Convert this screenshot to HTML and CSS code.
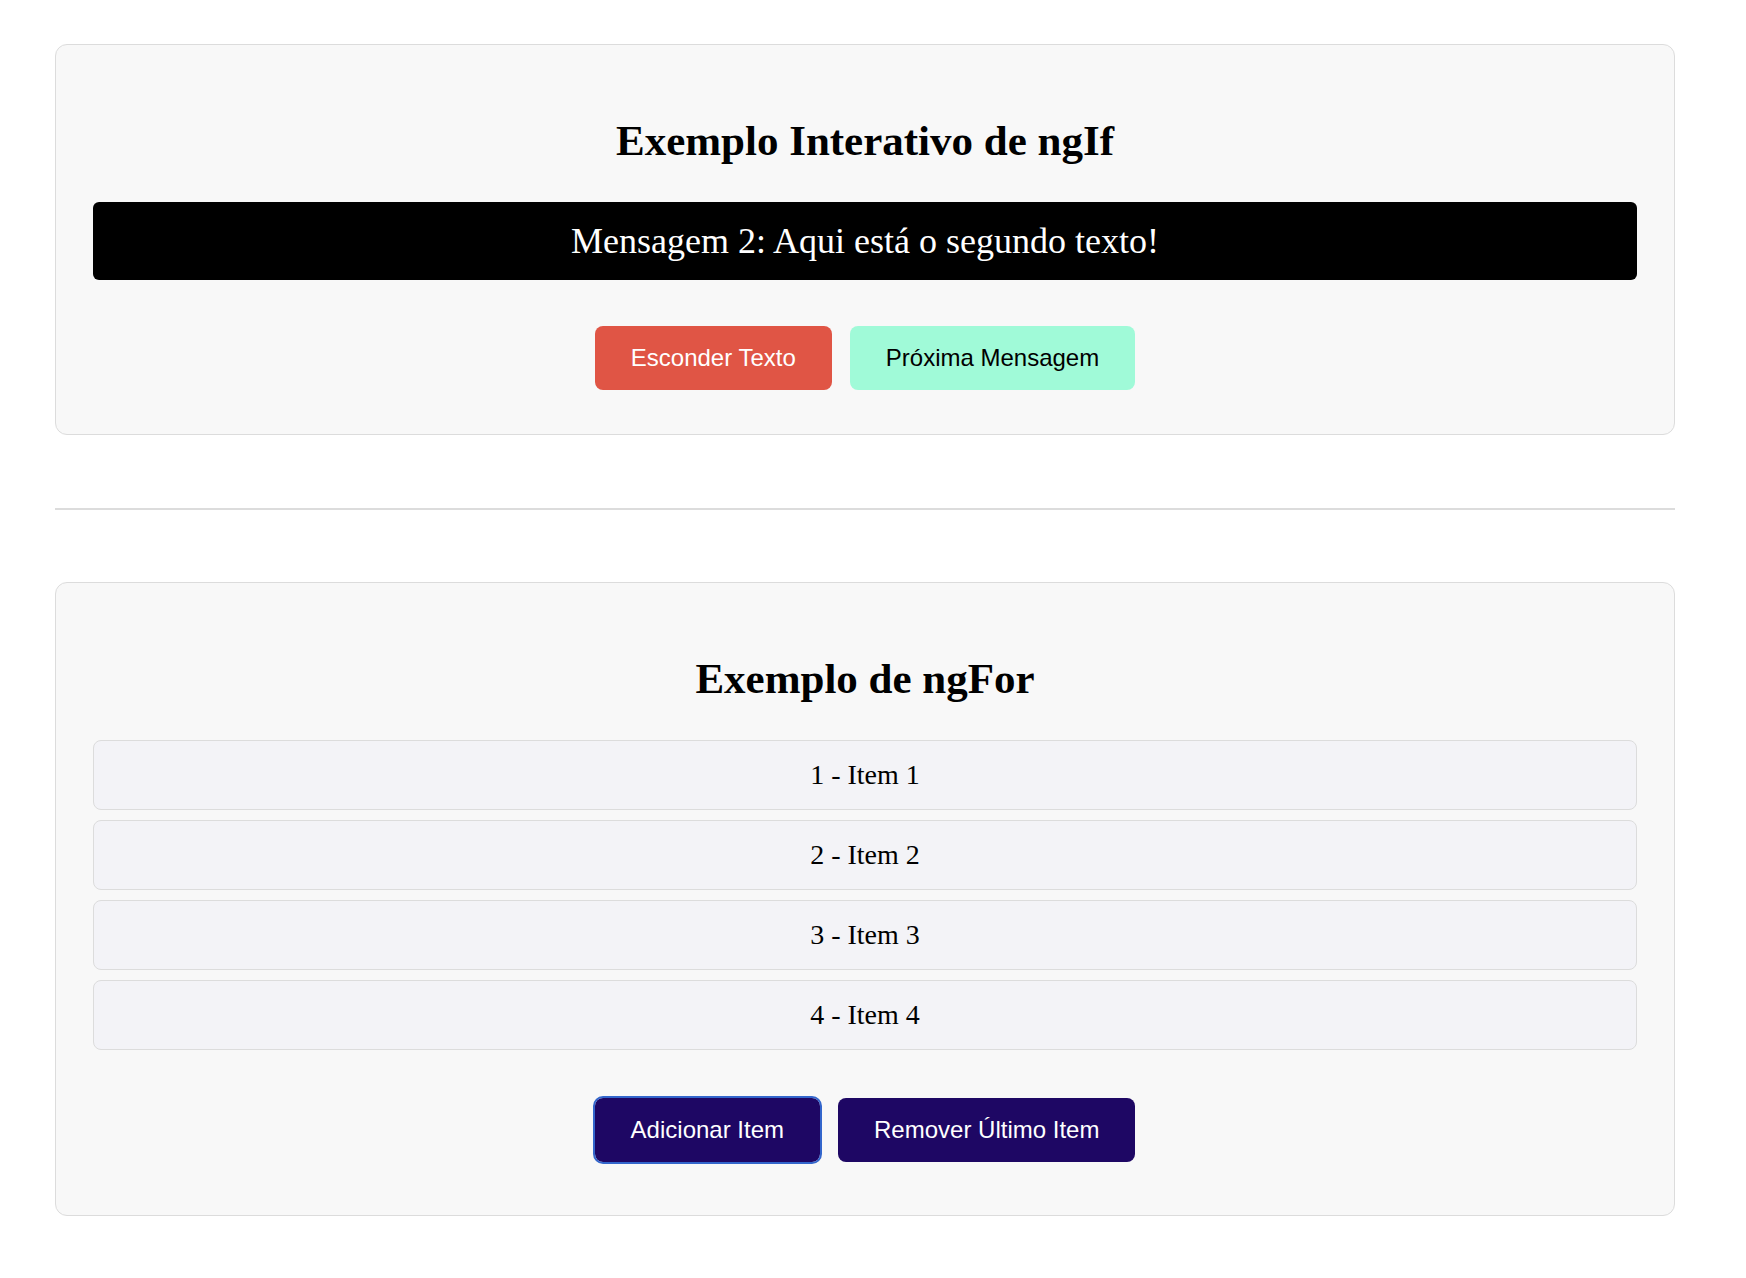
FILE: index.html
```html
<!DOCTYPE html>
<html lang="pt">
<head>
<meta charset="utf-8">
<title>Exemplos ngIf e ngFor</title>
<link rel="stylesheet" href="styles.css">
</head>
<body>
<div class="page">
  <section class="card card-if">
    <h2 class="card-title">Exemplo Interativo de ngIf</h2>
    <div class="message">Mensagem 2: Aqui está o segundo texto!</div>
    <div class="actions actions-if">
      <button class="btn btn-red">Esconder Texto</button>
      <button class="btn btn-mint">Próxima Mensagem</button>
    </div>
  </section>

  <hr class="divider">

  <section class="card card-for">
    <h2 class="card-title">Exemplo de ngFor</h2>
    <ul class="items">
      <li class="item">1 - Item 1</li>
      <li class="item">2 - Item 2</li>
      <li class="item">3 - Item 3</li>
      <li class="item">4 - Item 4</li>
    </ul>
    <div class="actions actions-for">
      <button class="btn btn-purple btn-focused">Adicionar Item</button>
      <button class="btn btn-purple">Remover Último Item</button>
    </div>
  </section>
</div>
</body>
</html>
```

FILE: styles.css
```css
html, body {
  margin: 0;
  padding: 0;
  background: #ffffff;
}

body {
  font-family: "Liberation Serif", "Times New Roman", serif;
  color: #000;
}

.page {
  width: 1620px;
  margin: 0 0 0 55px;
  padding-top: 44px;
  padding-bottom: 40px;
}

.card {
  background: #f8f8f8;
  border: 1px solid #dcdcdc;
  border-radius: 12px;
  padding: 37px;
  text-align: center;
}

.card-title {
  font-family: "Liberation Serif", "Times New Roman", serif;
  font-weight: bold;
  font-size: 43px;
  line-height: normal;
  margin: 34px 0 37px;
}

.message {
  background: #000;
  color: #fff;
  border-radius: 6px;
  font-size: 36px;
  line-height: 41px;
  padding: 18.5px 16px;
}

.actions {
  display: flex;
  justify-content: center;
  gap: 18px;
}

.actions-if {
  margin-top: 46px;
  margin-bottom: 7px;
}

.actions-for {
  margin-top: 48px;
  margin-bottom: 16px;
}

.btn {
  font-family: "Liberation Sans", Arial, Helvetica, sans-serif;
  font-size: 24px;
  line-height: 28px;
  padding: 18px 36px;
  border: none;
  border-radius: 8px;
  cursor: pointer;
}

.btn-red {
  background: #e05545;
  color: #fff;
}

.btn-mint {
  background: #a0fad8;
  color: #000;
}

.btn-purple {
  background: #1e0764;
  color: #fff;
}

.btn-focused {
  outline: 2.5px solid #3366cc;
  outline-offset: 0;
}

.divider {
  height: 0;
  border: 0;
  border-top: 2px solid #dcdcdc;
  margin: 73px 0 72px;
}

.items {
  list-style: none;
  margin: 0;
  padding: 0;
  display: flex;
  flex-direction: column;
  gap: 10px;
}

.item {
  background: #f3f3f7;
  border: 1px solid #dcdcdc;
  border-radius: 8px;
  font-size: 28px;
  line-height: 32px;
  padding: 18px 16px;
}
```
